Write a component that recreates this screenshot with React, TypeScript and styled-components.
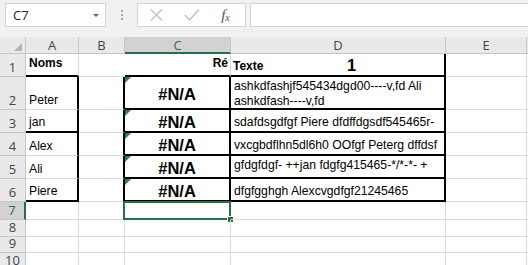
import React from 'react';
import styled, { createGlobalStyle, css } from 'styled-components';

const GlobalStyle = createGlobalStyle`
  html, body { margin: 0; padding: 0; background: #fff; overflow: hidden; }
  body { font-family: "Liberation Sans", Arial, sans-serif; }
`;

const GREEN = '#217346';
const GRID = '#dadada';
const HEAD_LINE = '#c6c6c6';
const HEAD_BG = '#e9e9e9';
const HEAD_ACTIVE = '#d2d2d2';

type Edge = 'thin' | 'thick' | 'none';
type HAlign = 'left' | 'center' | 'right';
type VAlign = 'top' | 'center' | 'bottom';

type CellSpec = {
  text?: string;
  r?: Edge;
  b?: Edge;
  h?: HAlign;
  v?: VAlign;
  bold?: boolean;
  size?: number;
  flag?: boolean;
};

const edge = (e: Edge = 'thin') =>
  e === 'thick' ? '2px solid #000' : e === 'none' ? '1px solid transparent' : `1px solid ${GRID}`;

const hMap = { left: 'flex-start', center: 'center', right: 'flex-end' };
const vMap = { top: 'flex-start', center: 'center', bottom: 'flex-end' };

const Page = styled.div`
  width: 528px;
  height: 265px;
  overflow: hidden;
  display: flex;
  flex-direction: column;
`;

// ---- formula bar ----
const FormulaBar = styled.div`
  flex: none;
  height: 37px;
  box-sizing: border-box;
  background: #f1f1f1;
  display: flex;
  align-items: flex-start;
  padding: 3px 0 0 5px;
`;

const NameBox = styled.div`
  width: 101px;
  height: 24px;
  box-sizing: border-box;
  background: #fff;
  border: 1px solid #d4d4d4;
  display: flex;
  align-items: center;
  justify-content: space-between;
  padding: 0 6px 0 7px;
  font-family: "Open Sans", sans-serif;
  font-size: 13px;
  color: #222;
`;

const DropArrow = styled.span`
  width: 0;
  height: 0;
  border-left: 3px solid transparent;
  border-right: 3px solid transparent;
  border-top: 3px solid #666;
`;

const Grip = styled.div`
  width: 31px;
  height: 24px;
  display: flex;
  flex-direction: column;
  align-items: center;
  justify-content: center;
  gap: 2px;
`;

const GripDot = styled.span`
  width: 2px;
  height: 2px;
  background: #a8a8a8;
`;

const FxButtons = styled.div`
  width: 109px;
  height: 24px;
  box-sizing: border-box;
  background: #fff;
  border: 1px solid #d4d4d4;
  display: grid;
  grid-template-columns: 36px 36px 1fr;
  align-items: center;
  justify-items: center;
`;

const FxLabel = styled.span`
  font-family: "Liberation Serif", serif;
  font-style: italic;
  font-size: 15px;
  color: #555;
  padding-right: 4px;
  sub {
    font-size: 10px;
    vertical-align: -1px;
  }
`;

const FormulaInput = styled.div`
  flex: 1;
  height: 24px;
  margin-left: 4px;
  box-sizing: border-box;
  background: #fff;
  border: 1px solid #d4d4d4;
  border-right: none;
`;

// ---- sheet ----
const Sheet = styled.div`
  flex: 1;
  display: grid;
  grid-template-columns: 26px 53px 46px 106px 215px 81px 1fr;
  grid-template-rows: 17px 23px 33px 23px 23px 23px 23px 18px 17px 16px 17px;
  background: #fff;
`;

const headFont = css`
  font-family: "Open Sans", "Liberation Sans", sans-serif;
  font-size: 13px;
  line-height: 13px;
`;

const Corner = styled.div`
  background: ${HEAD_BG};
  border-right: 1px solid ${HEAD_LINE};
  border-bottom: 1px solid ${HEAD_LINE};
  box-sizing: border-box;
  display: flex;
  align-items: flex-end;
  justify-content: flex-end;
  padding: 0 3px 2px 0;
`;

const ColHeader = styled.div<{ $active?: boolean }>`
  ${headFont};
  box-sizing: border-box;
  background: ${(p) => (p.$active ? HEAD_ACTIVE : HEAD_BG)};
  color: ${(p) => (p.$active ? GREEN : '#444')};
  border-right: 1px solid ${HEAD_LINE};
  border-bottom: ${(p) => (p.$active ? `2px solid ${GREEN}` : `1px solid ${HEAD_LINE}`)};
  display: flex;
  justify-content: center;
  align-items: center;
  padding-top: ${(p) => (p.$active ? 2 : 1)}px;
`;

const RowHeader = styled.div<{ $active?: boolean }>`
  ${headFont};
  box-sizing: border-box;
  background: ${(p) => (p.$active ? HEAD_ACTIVE : HEAD_BG)};
  color: ${(p) => (p.$active ? GREEN : '#444')};
  border-right: ${(p) => (p.$active ? `2px solid ${GREEN}` : `1px solid ${HEAD_LINE}`)};
  border-bottom: 1px solid ${HEAD_LINE};
  display: flex;
  justify-content: center;
  align-items: flex-end;
  padding-bottom: 2px;
`;

const Cell = styled.div<{
  $r?: Edge;
  $b?: Edge;
  $h?: HAlign;
  $v?: VAlign;
  $bold?: boolean;
  $size?: number;
}>`
  position: relative;
  box-sizing: border-box;
  min-width: 0;
  border-right: ${(p) => edge(p.$r)};
  border-bottom: ${(p) => edge(p.$b)};
  display: flex;
  justify-content: ${(p) => hMap[p.$h ?? 'left']};
  align-items: ${(p) => vMap[p.$v ?? 'bottom']};
  padding: ${(p) => (p.$v === 'center' ? '3px 2px 0' : '2px 2px 1px 3px')};
  font-size: ${(p) => p.$size ?? 12.2}px;
  font-weight: ${(p) => (p.$bold ? 700 : 400)};
  line-height: 15px;
  white-space: pre;
  color: #000;
`;

const SplitCell = styled(Cell)`
  display: grid;
  grid-template: 1fr / 1fr;
  padding: 0 2px 1px 2px;
`;

const BigNum = styled.span`
  grid-area: 1 / 1;
  justify-self: center;
  align-self: start;
  margin: 4px 0 0 28px;
  font-size: 16.5px;
  font-weight: 700;
`;

const Caption = styled.span`
  grid-area: 1 / 1;
  justify-self: start;
  align-self: end;
  font-size: 12px;
  font-weight: 700;
`;

const ErrorFlag = styled.span`
  position: absolute;
  top: 0;
  left: 0;
  width: 0;
  height: 0;
  border-top: 6px solid #1f8a3b;
  border-right: 6px solid transparent;
`;

const Selection = styled.div`
  position: absolute;
  top: -1px;
  left: -2px;
  right: -1px;
  bottom: -1px;
  border: 2px solid ${GREEN};
  pointer-events: none;
`;

const FillHandle = styled.span`
  position: absolute;
  right: -4px;
  bottom: -4px;
  width: 5px;
  height: 5px;
  background: ${GREEN};
  box-shadow: 0 0 0 1px #fff;
`;

const T: Edge = 'thick';

const na: CellSpec = { text: '#N/A', r: T, b: T, h: 'center', v: 'center', bold: true, size: 16.5, flag: true };

const dataRows: CellSpec[][] = [
  [
    { text: 'Peter', r: T },
    { r: T },
    na,
    { text: 'ashkdfashjf545434dgd00----v,fd Ali\nashkdfash----v,fd', r: T, b: T, v: 'top' },
    {},
    {},
  ],
  [{ text: 'jan', r: T, b: T }, { r: T }, na, { text: 'sdafdsgdfgf Piere dfdffdgsdf545465r-', r: T, b: T }, {}, {}],
  [{ text: 'Alex', r: T }, { r: T }, na, { text: 'vxcgbdflhn5dl6h0 OOfgf Peterg dffdsf', r: T, b: T }, {}, {}],
  [{ text: 'Ali', r: T }, { r: T }, na, { text: 'gfdgfdgf- ++jan fdgfg415465-*/*-*- +', r: T, b: T, v: 'top' }, {}, {}],
  [{ text: 'Piere', r: T, b: T }, { r: T }, na, { text: 'dfgfgghgh Alexcvgdfgf21245465', r: T, b: T }, {}, {}],
];

const columns = ['A', 'B', 'C', 'D', 'E', ''];

const SpecCell = ({ spec }: { spec: CellSpec }) => (
  <Cell $r={spec.r} $b={spec.b} $h={spec.h} $v={spec.v} $bold={spec.bold} $size={spec.size}>
    {spec.flag && <ErrorFlag />}
    {spec.text}
  </Cell>
);

const App = () => {
  return (
    <Page>
      <GlobalStyle />
      <FormulaBar>
        <NameBox>
          C7
          <DropArrow />
        </NameBox>
        <Grip>
          <GripDot />
          <GripDot />
          <GripDot />
        </Grip>
        <FxButtons>
          <svg width="13" height="12" viewBox="0 0 13 12">
            <path d="M1 0.5 L12 11.5 M12 0.5 L1 11.5" stroke="#c0c0c0" strokeWidth="1.2" fill="none" />
          </svg>
          <svg width="16" height="12" viewBox="0 0 16 12">
            <path d="M1 6 L5.5 11 L15 0.5" stroke="#c0c0c0" strokeWidth="1.3" fill="none" />
          </svg>
          <FxLabel>
            f<sub>x</sub>
          </FxLabel>
        </FxButtons>
        <FormulaInput />
      </FormulaBar>

      <Sheet>
        <Corner>
          <svg width="8" height="8" viewBox="0 0 8 8">
            <path d="M8 0 L8 8 L0 8 Z" fill="#b5b5b5" />
          </svg>
        </Corner>
        {columns.map((c, i) => (
          <ColHeader key={i} $active={c === 'C'}>
            {c}
          </ColHeader>
        ))}

        {/* row 1 */}
        <RowHeader>1</RowHeader>
        <Cell $b={T} $v="top" $bold $size={12}>
          Noms
        </Cell>
        <Cell $r="none" />
        <Cell $b={T} $v="top" $h="right" $bold $size={12}>
          Ré
        </Cell>
        <SplitCell $r={T} $b={T}>
          <BigNum>1</BigNum>
          <Caption>Texte</Caption>
        </SplitCell>
        <Cell />
        <Cell />

        {dataRows.map((row, i) => (
          <React.Fragment key={i}>
            <RowHeader>{i + 2}</RowHeader>
            {row.map((spec, j) => (
              <SpecCell key={j} spec={spec} />
            ))}
          </React.Fragment>
        ))}

        {/* row 7 with the active cell */}
        <RowHeader $active>7</RowHeader>
        <Cell />
        <Cell />
        <Cell>
          <Selection>
            <FillHandle />
          </Selection>
        </Cell>
        <Cell />
        <Cell />
        <Cell />

        {[8, 9, 10].map((n) => (
          <React.Fragment key={n}>
            <RowHeader>{n}</RowHeader>
            {columns.map((_, j) => (
              <Cell key={j} />
            ))}
          </React.Fragment>
        ))}
      </Sheet>
    </Page>
  );
};

export default App;
